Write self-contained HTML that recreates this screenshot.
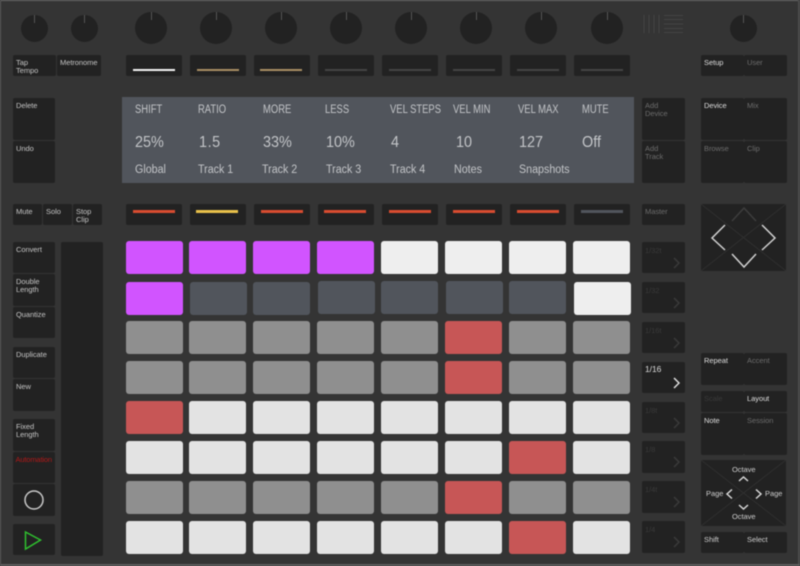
<!DOCTYPE html>
<html><head><meta charset="utf-8">
<style>
html,body{margin:0;padding:0;background:#343434;}
#r{position:relative;width:800px;height:566px;overflow:hidden;background:#343434;font-family:"Liberation Sans",sans-serif;filter:blur(.5px);}
#r div{position:absolute;box-sizing:border-box;}
.b{background:#222;border-radius:2px;color:#c4c4c4;font-size:7.5px;line-height:7.5px;padding:4px 3px 0 3px;letter-spacing:-.05px;white-space:nowrap;}
.d{color:#6c6c6c;}.x{color:#3a3a3a;}
.p{border-radius:3px;width:57px;height:33px;}
.w{background:#eee;}.e{background:#e3e3e3;}.g{background:#8f8f8f;}.u{background:#d154ff;}.s{background:#51555c;}.c{background:#c75656;}
.l{height:2px;width:42px;background:#444;}
.k{border-radius:50%;background:#222;}
.k:after{content:"";position:absolute;left:50%;top:0;width:1px;height:8px;margin-left:-.5px;background:#555;}
.t{color:#c3c5c8;white-space:nowrap;font-size:11.5px;line-height:14px;transform-origin:0 50%;transform:scaleX(.93);}
.h{transform:scaleX(.82);}
.v{font-size:15.5px;line-height:18px;}
</style></head><body>
<div id="r">
<div style="left:0;top:0;width:800px;height:1px;background:#6a6a6a"></div>
<div style="left:0;top:0;width:1px;height:566px;background:#5c5c5c"></div>
<div style="left:798px;top:0;width:2px;height:566px;background:#4c4c4c"></div>
<div style="left:0;top:564px;width:800px;height:2px;background:#5c5c5c"></div>

<div class="k" style="left:21px;top:15px;width:27px;height:27px"></div>
<div class="k" style="left:71px;top:15px;width:27px;height:27px"></div>
<div class="k" style="left:135px;top:12px;width:32px;height:32px"></div>
<div class="k" style="left:200px;top:12px;width:32px;height:32px"></div>
<div class="k" style="left:265px;top:12px;width:32px;height:32px"></div>
<div class="k" style="left:330px;top:12px;width:32px;height:32px"></div>
<div class="k" style="left:395px;top:12px;width:32px;height:32px"></div>
<div class="k" style="left:460px;top:12px;width:32px;height:32px"></div>
<div class="k" style="left:525px;top:12px;width:32px;height:32px"></div>
<div class="k" style="left:591px;top:12px;width:32px;height:32px"></div>
<div class="k" style="left:730px;top:15px;width:27px;height:27px"></div>

<svg style="position:absolute;left:642px;top:14px" width="42" height="20" stroke="#434343" stroke-width="1" fill="none"><path d="M2 1V19M7 1V19M12 1V19M17 1V19M22 1.500H41M22 5.500H41M22 10H41M22 14.500H41M22 18.500H41"/></svg>

<div class="b" style="left:13px;top:55px;width:43px;height:21px">Tap<br>Tempo</div>
<div class="b" style="left:57px;top:55px;width:44px;height:21px;padding-left:3px">Metronome</div>
<div class="b" style="left:126px;top:55px;width:56px;height:21px"></div>
<div class="b" style="left:190px;top:55px;width:56px;height:21px"></div>
<div class="b" style="left:254px;top:55px;width:56px;height:21px"></div>
<div class="b" style="left:318px;top:55px;width:56px;height:21px"></div>
<div class="b" style="left:382px;top:55px;width:56px;height:21px"></div>
<div class="b" style="left:446px;top:55px;width:56px;height:21px"></div>
<div class="b" style="left:510px;top:55px;width:56px;height:21px"></div>
<div class="b" style="left:574px;top:55px;width:56px;height:21px"></div>
<div class="l" style="left:133px;top:69px;background:#f2f2f2"></div>
<div class="l" style="left:197px;top:69px;background:#a98f63"></div>
<div class="l" style="left:260px;top:69px;background:#a98f63"></div>
<div class="l" style="left:325px;top:69px"></div>
<div class="l" style="left:389px;top:69px"></div>
<div class="l" style="left:453px;top:69px"></div>
<div class="l" style="left:517px;top:69px"></div>
<div class="l" style="left:581px;top:69px"></div>

<div class="b" style="left:701px;top:55px;width:43px;height:21px;color:#ddd">Setup</div>
<div class="b d" style="left:744px;top:55px;width:43px;height:21px">User</div>

<div class="b" style="left:13px;top:98px;width:42px;height:42px">Delete</div>
<div class="b" style="left:13px;top:141px;width:42px;height:42px">Undo</div>

<div style="left:122px;top:97px;width:512px;height:86px;background:#51555c"></div>
<div class="t h" style="left:135px;top:103px">SHIFT</div>
<div class="t h" style="left:198px;top:103px">RATIO</div>
<div class="t h" style="left:263px;top:103px">MORE</div>
<div class="t h" style="left:325px;top:103px">LESS</div>
<div class="t h" style="left:390px;top:103px">VEL STEPS</div>
<div class="t h" style="left:453px;top:103px">VEL MIN</div>
<div class="t h" style="left:518px;top:103px">VEL MAX</div>
<div class="t h" style="left:582px;top:103px">MUTE</div>
<div class="t v" style="left:135px;top:134px">25%</div>
<div class="t v" style="left:199px;top:134px;letter-spacing:.6px">1.5</div>
<div class="t v" style="left:263px;top:134px">33%</div>
<div class="t v" style="left:326px;top:134px">10%</div>
<div class="t v" style="left:391px;top:134px">4</div>
<div class="t v" style="left:456px;top:134px">10</div>
<div class="t v" style="left:519px;top:134px">127</div>
<div class="t v" style="left:582px;top:134px">Off</div>
<div class="t" style="left:135px;top:163px">Global</div>
<div class="t" style="left:198px;top:163px">Track 1</div>
<div class="t" style="left:262px;top:163px">Track 2</div>
<div class="t" style="left:326px;top:163px">Track 3</div>
<div class="t" style="left:390px;top:163px">Track 4</div>
<div class="t" style="left:454px;top:163px">Notes</div>
<div class="t" style="left:519px;top:163px">Snapshots</div>

<div class="b d" style="left:642px;top:98px;width:43px;height:42px">Add<br>Device</div>
<div class="b d" style="left:642px;top:141px;width:43px;height:42px">Add<br>Track</div>
<div class="b" style="left:701px;top:98px;width:43px;height:42px;color:#ddd">Device</div>
<div class="b d" style="left:744px;top:98px;width:43px;height:42px">Mix</div>
<div class="b d" style="left:701px;top:141px;width:43px;height:42px">Browse</div>
<div class="b d" style="left:744px;top:141px;width:43px;height:42px">Clip</div>

<div class="b" style="left:13px;top:204px;width:29px;height:21px">Mute</div>
<div class="b" style="left:43px;top:204px;width:29px;height:21px">Solo</div>
<div class="b" style="left:73px;top:204px;width:29px;height:21px">Stop<br>Clip</div>
<div class="b" style="left:126px;top:204px;width:56px;height:21px"></div>
<div class="b" style="left:190px;top:204px;width:56px;height:21px"></div>
<div class="b" style="left:254px;top:204px;width:56px;height:21px"></div>
<div class="b" style="left:318px;top:204px;width:56px;height:21px"></div>
<div class="b" style="left:382px;top:204px;width:56px;height:21px"></div>
<div class="b" style="left:446px;top:204px;width:56px;height:21px"></div>
<div class="b" style="left:510px;top:204px;width:56px;height:21px"></div>
<div class="b" style="left:574px;top:204px;width:56px;height:21px"></div>
<div class="l" style="left:133px;top:210px;height:3px;background:#d84c30"></div>
<div class="l" style="left:196px;top:210px;height:3px;background:#e8c04a"></div>
<div class="l" style="left:261px;top:210px;height:3px;background:#d84c30"></div>
<div class="l" style="left:324px;top:210px;height:3px;background:#d84c30"></div>
<div class="l" style="left:389px;top:210px;height:3px;background:#d84c30"></div>
<div class="l" style="left:453px;top:210px;height:3px;background:#d84c30"></div>
<div class="l" style="left:517px;top:210px;height:3px;background:#d84c30"></div>
<div class="l" style="left:581px;top:210px;height:3px;background:#51555c"></div>
<div class="b d" style="left:642px;top:204px;width:43px;height:21px">Master</div>

<div class="b" style="left:701px;top:204px;width:85px;height:67px;padding:0">
<svg style="position:absolute;left:0;top:0" width="85" height="67" fill="none"><path d="M0 0L85 67M85 0L0 67" stroke="#2f2f2f" stroke-width="1"/><path d="M31 17L43 4L55 17" stroke="#3d3d3d" stroke-width="1.500"/><path d="M24 21L11 34L24 46M61 21L74 34L61 46M31 50L43 63L55 50" stroke="#d2d2d2" stroke-width="1.500"/></svg></div>

<div class="b" style="left:13px;top:242px;width:42px;height:31px">Convert</div>
<div class="b" style="left:13px;top:274px;width:42px;height:32px">Double<br>Length</div>
<div class="b" style="left:13px;top:307px;width:42px;height:31px">Quantize</div>
<div class="b" style="left:13px;top:347px;width:42px;height:31px">Duplicate</div>
<div class="b" style="left:13px;top:379px;width:42px;height:32px">New</div>
<div class="b" style="left:13px;top:419px;width:42px;height:32px">Fixed<br>Length</div>
<div class="b" style="left:13px;top:452px;width:42px;height:31px;color:#b01818;letter-spacing:-.15px;padding-left:2.500px">Automation</div>
<div class="b" style="left:13px;top:484px;width:42px;height:32px;padding:0"><svg style="position:absolute;left:0;top:0" width="42" height="32" fill="none"><circle cx="21" cy="16" r="9" stroke="#c8c8c8" stroke-width="1.500"/></svg></div>
<div class="b" style="left:13px;top:524px;width:42px;height:31px;padding:0"><svg style="position:absolute;left:0;top:0" width="42" height="31" fill="none"><path d="M12.500 8L27.500 16L12.500 25Z" stroke="#2fc02f" stroke-width="1.500"/></svg></div>
<div class="b" style="left:61px;top:242px;width:42px;height:314px;padding:0"></div>

<div class="p u" style="left:126px;top:241px"></div><div class="p u" style="left:189px;top:241px"></div><div class="p u" style="left:253px;top:241px"></div><div class="p u" style="left:317px;top:241px"></div><div class="p w" style="left:381px;top:241px"></div><div class="p w" style="left:445px;top:241px"></div><div class="p w" style="left:509px;top:241px"></div><div class="p w" style="left:573px;top:241px"></div>
<div class="p u" style="left:126px;top:282px"></div><div class="p s" style="left:190px;top:282px"></div><div class="p s" style="left:253px;top:282px"></div><div class="p s" style="left:318px;top:281px"></div><div class="p s" style="left:381px;top:281px"></div><div class="p s" style="left:446px;top:281px"></div><div class="p s" style="left:509px;top:281px"></div><div class="p w" style="left:574px;top:282px"></div>
<div class="p g" style="left:126px;top:321px"></div><div class="p g" style="left:189px;top:321px"></div><div class="p g" style="left:253px;top:321px"></div><div class="p g" style="left:317px;top:321px"></div><div class="p g" style="left:381px;top:321px"></div><div class="p c" style="left:445px;top:321px"></div><div class="p g" style="left:509px;top:321px"></div><div class="p g" style="left:573px;top:321px"></div>
<div class="p g" style="left:126px;top:361px"></div><div class="p g" style="left:189px;top:361px"></div><div class="p g" style="left:253px;top:361px"></div><div class="p g" style="left:317px;top:361px"></div><div class="p g" style="left:381px;top:361px"></div><div class="p c" style="left:445px;top:361px"></div><div class="p g" style="left:509px;top:361px"></div><div class="p g" style="left:573px;top:361px"></div>
<div class="p c" style="left:126px;top:401px"></div><div class="p e" style="left:189px;top:401px"></div><div class="p e" style="left:253px;top:401px"></div><div class="p e" style="left:317px;top:401px"></div><div class="p e" style="left:381px;top:401px"></div><div class="p e" style="left:445px;top:401px"></div><div class="p e" style="left:509px;top:401px"></div><div class="p e" style="left:573px;top:401px"></div>
<div class="p e" style="left:126px;top:441px"></div><div class="p e" style="left:189px;top:441px"></div><div class="p e" style="left:253px;top:441px"></div><div class="p e" style="left:317px;top:441px"></div><div class="p e" style="left:381px;top:441px"></div><div class="p e" style="left:445px;top:441px"></div><div class="p c" style="left:509px;top:441px"></div><div class="p e" style="left:573px;top:441px"></div>
<div class="p g" style="left:126px;top:481px"></div><div class="p g" style="left:189px;top:481px"></div><div class="p g" style="left:253px;top:481px"></div><div class="p g" style="left:317px;top:481px"></div><div class="p g" style="left:381px;top:481px"></div><div class="p c" style="left:445px;top:481px"></div><div class="p g" style="left:509px;top:481px"></div><div class="p g" style="left:573px;top:481px"></div>
<div class="p e" style="left:126px;top:521px"></div><div class="p e" style="left:189px;top:521px"></div><div class="p e" style="left:253px;top:521px"></div><div class="p e" style="left:317px;top:521px"></div><div class="p e" style="left:381px;top:521px"></div><div class="p e" style="left:445px;top:521px"></div><div class="p c" style="left:509px;top:521px"></div><div class="p e" style="left:573px;top:521px"></div>

<div class="b x" style="left:642px;top:242px;width:43px;height:31px;padding-top:5px">1/32t<svg style="position:absolute;left:0;top:0" width="43" height="31" fill="none"><path d="M32 16L37 21L32 26" stroke="#3a3a3a" stroke-width="1.500"/></svg></div>
<div class="b x" style="left:642px;top:282px;width:43px;height:31px;padding-top:5px">1/32<svg style="position:absolute;left:0;top:0" width="43" height="31" fill="none"><path d="M32 16L37 21L32 26" stroke="#3a3a3a" stroke-width="1.500"/></svg></div>
<div class="b x" style="left:642px;top:322px;width:43px;height:31px;padding-top:5px">1/16t<svg style="position:absolute;left:0;top:0" width="43" height="31" fill="none"><path d="M32 16L37 21L32 26" stroke="#3a3a3a" stroke-width="1.500"/></svg></div>
<div class="b" style="left:642px;top:362px;width:43px;height:31px;padding-top:4px;color:#ddd;font-size:8.5px">1/16<svg style="position:absolute;left:0;top:0" width="43" height="31" fill="none"><path d="M32 16L37 21L32 26" stroke="#ddd" stroke-width="1.500"/></svg></div>
<div class="b x" style="left:642px;top:402px;width:43px;height:31px;padding-top:5px">1/8t<svg style="position:absolute;left:0;top:0" width="43" height="31" fill="none"><path d="M32 16L37 21L32 26" stroke="#3a3a3a" stroke-width="1.500"/></svg></div>
<div class="b x" style="left:642px;top:441px;width:43px;height:32px;padding-top:5px">1/8<svg style="position:absolute;left:0;top:0" width="43" height="32" fill="none"><path d="M32 16L37 21L32 26" stroke="#3a3a3a" stroke-width="1.500"/></svg></div>
<div class="b x" style="left:642px;top:481px;width:43px;height:32px;padding-top:5px">1/4t<svg style="position:absolute;left:0;top:0" width="43" height="32" fill="none"><path d="M32 16L37 21L32 26" stroke="#3a3a3a" stroke-width="1.500"/></svg></div>
<div class="b x" style="left:642px;top:521px;width:43px;height:32px;padding-top:5px">1/4<svg style="position:absolute;left:0;top:0" width="43" height="32" fill="none"><path d="M32 16L37 21L32 26" stroke="#3a3a3a" stroke-width="1.500"/></svg></div>

<div class="b" style="left:701px;top:353px;width:43px;height:32px;color:#ddd">Repeat</div>
<div class="b d" style="left:744px;top:353px;width:43px;height:32px">Accent</div>
<div class="b x" style="left:701px;top:391px;width:43px;height:21px">Scale</div>
<div class="b" style="left:744px;top:391px;width:43px;height:21px;color:#ddd">Layout</div>
<div class="b" style="left:701px;top:413px;width:43px;height:42px;color:#ddd">Note</div>
<div class="b d" style="left:744px;top:413px;width:43px;height:42px">Session</div>

<div class="b" style="left:701px;top:460px;width:85px;height:66px;padding:0;color:#ccc">
<svg style="position:absolute;left:0;top:0" width="85" height="66" fill="none"><path d="M0 0L85 66M85 0L0 66" stroke="#2f2f2f" stroke-width="1"/><path d="M38 21L42.500 17L47 21M38 45L42.500 49L47 45" stroke="#d8d8d8" stroke-width="1.500"/><path d="M31 29.500L26 34L31 38.500M55 29.500L60 34L55 38.500" stroke="#d8d8d8" stroke-width="1.500"/></svg>
<div style="left:31px;top:6px">Octave</div><div style="left:31px;top:53px">Octave</div>
<div style="left:5px;top:30px">Page</div><div style="left:64px;top:30px">Page</div>
</div>
<div class="b" style="left:701px;top:532px;width:43px;height:21px;color:#ccc">Shift</div>
<div class="b" style="left:744px;top:532px;width:43px;height:21px;color:#ccc">Select</div>
</div>
</body></html>
